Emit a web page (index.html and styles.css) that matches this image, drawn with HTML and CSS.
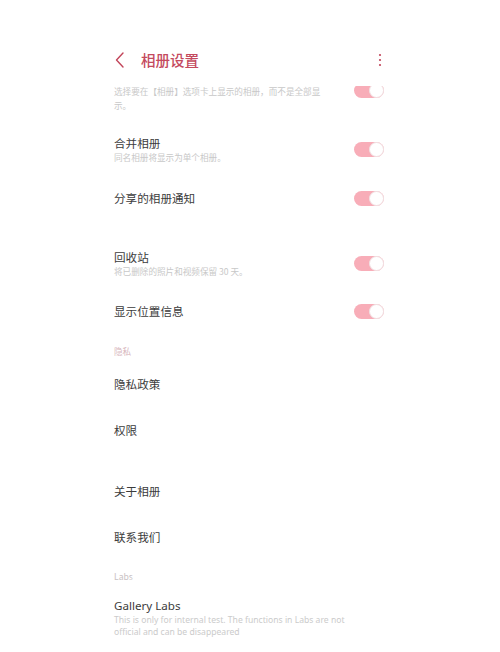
FILE: index.html
```html
<!DOCTYPE html>
<html lang="zh">
<head>
<meta charset="utf-8">
<title>相册设置</title>
<link rel="stylesheet" href="styles.css">
</head>
<body>
<div class="screen">
  <header class="appbar">
    <svg class="back" width="12" height="18" viewBox="0 0 12 18"><path d="M9 2 L2.5 9 L9 16" fill="none" stroke="#c2455a" stroke-width="1.4" stroke-linecap="round" stroke-linejoin="round"/></svg>
    <h1 class="title">相册设置</h1>
    <svg class="more" width="4" height="16" viewBox="0 0 4 16"><circle cx="2" cy="3" r="1.1" fill="#c2455a"/><circle cx="2" cy="8" r="1.1" fill="#c2455a"/><circle cx="2" cy="13" r="1.1" fill="#c2455a"/></svg>
  </header>
  <main class="list">
    <div class="row row-first">
      <div class="text">
        <div class="label">显示相册</div>
        <div class="sub">选择要在【相册】选项卡上显示的相册，而不是全部显示。</div>
      </div>
      <span class="toggle"></span>
    </div>
    <div class="row row-sub">
      <div class="text">
        <div class="label">合并相册</div>
        <div class="sub">同名相册将显示为单个相册。</div>
      </div>
      <span class="toggle"></span>
    </div>
    <div class="row row-notify">
      <div class="text"><div class="label">分享的相册通知</div></div>
      <span class="toggle"></span>
    </div>
    <div class="row row-sub">
      <div class="text">
        <div class="label">回收站</div>
        <div class="sub">将已删除的照片和视频保留 30 天。</div>
      </div>
      <span class="toggle"></span>
    </div>
    <div class="row row-single">
      <div class="text"><div class="label">显示位置信息</div></div>
      <span class="toggle"></span>
    </div>
    <div class="section section-privacy">隐私</div>
    <div class="row row-link"><div class="label">隐私政策</div></div>
    <div class="row row-link"><div class="label">权限</div></div>
    <div class="group-gap"></div>
    <div class="row row-link"><div class="label">关于相册</div></div>
    <div class="row row-link"><div class="label">联系我们</div></div>
    <div class="section section-labs">Labs</div>
    <div class="row row-labs">
      <div class="text">
        <div class="label">Gallery Labs</div>
        <div class="sub sub-labs">This is only for internal test. The functions in Labs are not official and can be disappeared</div>
      </div>
    </div>
  </main>
</div>
</body>
</html>
```

FILE: styles.css
```css
html, body {
  margin: 0;
  padding: 0;
  background: #ffffff;
}
body {
  font-family: "Noto Sans CJK SC", "Noto Sans", sans-serif;
  color: #3a3a3a;
}
.screen {
  width: 500px;
  height: 652px;
  overflow: hidden;
  display: flex;
  flex-direction: column;
}
.appbar {
  position: relative;
  z-index: 2;
  background: #ffffff;
  height: 86px;
  flex: none;
  display: flex;
  align-items: center;
  padding: 34px 116px 0 114px;
  box-sizing: border-box;
}
.appbar .back {
  flex: none;
}
.appbar .title {
  margin: 0 0 0 15px;
  font-size: 14.5px;
  font-weight: 500;
  color: #c44a5e;
  line-height: 20px;
  flex: 1;
}
.appbar .more {
  margin-right: 2px;
  flex: none;
}
.list {
  position: relative;
  z-index: 1;
  padding: 0 116px 0 114px;
  flex: 1;
}
.row {
  display: flex;
  align-items: center;
  justify-content: space-between;
  box-sizing: border-box;
}
.text {
  flex: 1;
  min-width: 0;
  padding-right: 20px;
}
.label {
  font-size: 11.6px;
  line-height: 16px;
  color: #3c3c3c;
}
.sub {
  font-size: 8.6px;
  line-height: 14px;
  color: #c8c8c8;
}
.row-first {
  height: 60px;
  margin-top: -26px;
}
.row-sub {
  height: 58px;
}
.row-sub .sub {
  line-height: 12px;
}
.row-notify {
  height: 40px;
  margin-bottom: 16px;
}
.row-single {
  height: 38px;
}
.row-link {
  height: 46px;
}
.group-gap {
  height: 15px;
}
.section {
  font-size: 8.6px;
  line-height: 12px;
}
.section-privacy {
  padding: 15px 0 4px;
  color: #d8b8be;
}
.section-labs {
  padding: 10px 0 6px;
  color: #c9c2c4;
}
.row-labs {
  padding-top: 10px;
}
.row-labs .label {
  font-family: "Noto Sans", "Open Sans", sans-serif;
  font-size: 11.6px;
}
.sub-labs {
  font-family: "Noto Sans", "Open Sans", sans-serif;
  line-height: 12px;
  color: #cbcbcb;
}
.toggle {
  flex: none;
  width: 30px;
  height: 15px;
  border-radius: 8px;
  background: #f8adb8;
  position: relative;
}
.toggle::after {
  content: "";
  position: absolute;
  right: 0;
  top: 0;
  width: 15px;
  height: 15px;
  box-sizing: border-box;
  border-radius: 50%;
  background: #ffffff;
  border: 1px solid #f1e2e4;
}
```
